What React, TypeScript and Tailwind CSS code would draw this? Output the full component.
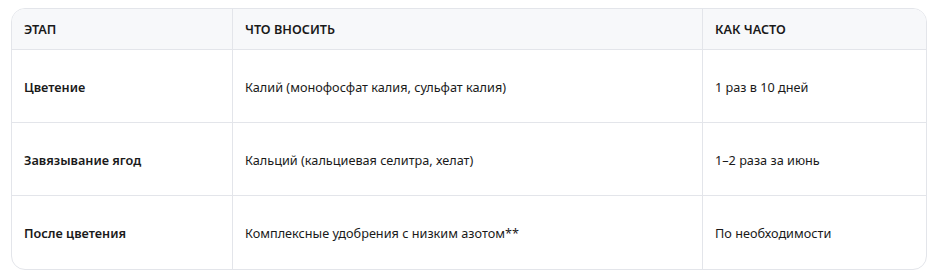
import React from "react";

const rows = [
  ["Цветение", "Калий (монофосфат калия, сульфат калия)", "1 раз в 10 дней"],
  ["Завязывание ягод", "Кальций (кальциевая селитра, хелат)", "1–2 раза за июнь"],
  ["После цветения", "Комплексные удобрения с низким азотом**", "По необходимости"],
];

export default function App() {
  return (
    <div className="w-[937px] h-[273px] bg-white pt-[8px] pl-[11px]" style={{ fontFamily: '"Segoe UI", "Noto Sans", sans-serif' }}>
      <div className="w-[916px] border border-[#e3e5ea] rounded-[14px] overflow-hidden text-[12.7px] text-[#1a1a1a]">
        <div className="flex h-[41px] bg-[#f7f8fa] border-b border-[#e3e5ea] font-semibold">
          <div className="w-[221px] border-r border-[#e3e5ea] px-3 pt-[2px] flex items-center">ЭТАП</div>
          <div className="w-[470px] border-r border-[#e3e5ea] px-3 pt-[2px] flex items-center">ЧТО ВНОСИТЬ</div>
          <div className="flex-1 px-3 pt-[2px] flex items-center">КАК ЧАСТО</div>
        </div>
        {rows.map((r, i) => (
          <div key={i} className={`flex h-[73px] ${i < rows.length - 1 ? "border-b border-[#e3e5ea]" : "h-[71px]"}`}>
            <div className="w-[221px] border-r border-[#e3e5ea] px-3 pt-[3px] flex items-center font-semibold">{r[0]}</div>
            <div className="w-[470px] border-r border-[#e3e5ea] px-3 pt-[3px] flex items-center">{r[1]}</div>
            <div className="flex-1 px-3 pt-[3px] flex items-center">{r[2]}</div>
          </div>
        ))}
      </div>
    </div>
  );
}
